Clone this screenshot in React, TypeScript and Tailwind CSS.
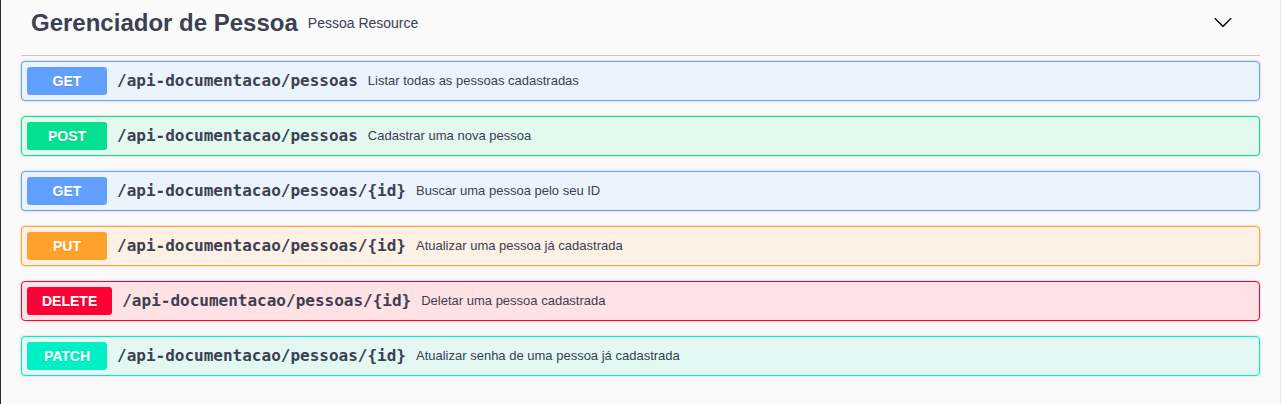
import React from 'react';

const operations = [
  {
    method: 'GET',
    path: '/api-documentacao/pessoas',
    summary: 'Listar todas as pessoas cadastradas',
    badge: 'bg-[#61a0fe]',
    block: 'bg-[#ebf3fd] border-[#61a0fe]',
  },
  {
    method: 'POST',
    path: '/api-documentacao/pessoas',
    summary: 'Cadastrar uma nova pessoa',
    badge: 'bg-[#03e08f]',
    block: 'bg-[#e3f8ef] border-[#03e08f]',
  },
  {
    method: 'GET',
    path: '/api-documentacao/pessoas/{id}',
    summary: 'Buscar uma pessoa pelo seu ID',
    badge: 'bg-[#61a0fe]',
    block: 'bg-[#ebf3fd] border-[#61a0fe]',
  },
  {
    method: 'PUT',
    path: '/api-documentacao/pessoas/{id}',
    summary: 'Atualizar uma pessoa já cadastrada',
    badge: 'bg-[#ffa12a]',
    block: 'bg-[#fdf0e4] border-[#ffa12a]',
  },
  {
    method: 'DELETE',
    path: '/api-documentacao/pessoas/{id}',
    summary: 'Deletar uma pessoa cadastrada',
    badge: 'bg-[#ff0035]',
    block: 'bg-[#fee2e5] border-[#ff0035]',
  },
  {
    method: 'PATCH',
    path: '/api-documentacao/pessoas/{id}',
    summary: 'Atualizar senha de uma pessoa já cadastrada',
    badge: 'bg-[#00f0c6]',
    block: 'bg-[#e3f8f2] border-[#00f0c6]',
  },
];

const App = () => {
  return (
    <div className="min-h-screen bg-[#fafafa] border-l border-l-[#2b2b2b] border-r border-r-[#e8e8e8] font-['Liberation_Sans',Arial,sans-serif] text-[#3b4151]">
      <div className="px-5">
        {/* tag header */}
        <div className="h-[56px] border-b border-[#c4c6cb] pt-[9px] pl-[10px] pr-[27px] flex items-start">
          <h4 className="text-[24px] font-bold leading-[28px]">Gerenciador de Pessoa</h4>
          <span className="flex-1 px-[10px] text-[14px] leading-[28px]">Pessoa Resource</span>
          <div className="h-[28px] flex items-center">
            <svg width="20" height="20" viewBox="0 0 20 20" className="mt-[-3px]">
              <path
                fill="#111"
                d="M17.418 6.109c.272-.268.709-.268.979 0s.271.701 0 .969l-7.908 7.83c-.27.268-.707.268-.979 0l-7.908-7.83c-.27-.268-.27-.701 0-.969.271-.268.709-.268.979 0L10 13.25l7.418-7.141z"
              />
            </svg>
          </div>
        </div>

        <div className="pt-[5px]">
          {operations.map((op, index) => (
            <div
              key={index}
              className={`mb-[15px] border rounded-[4px] shadow-[0_0_3px_rgba(0,0,0,0.19)] p-[5px] flex items-center ${op.block}`}
            >
              <span
                className={`min-w-[80px] px-[15px] py-[6px] rounded-[3px] text-white text-[14px] leading-[16px] font-bold text-center [text-shadow:0_1px_0_rgba(0,0,0,0.1)] ${op.badge}`}
              >
                {op.method}
              </span>
              <span className="px-[10px] font-['DejaVu_Sans_Mono',monospace] font-bold text-[16px] text-[#3b4151]">
                {op.path}
              </span>
              <span className="text-[13px] text-[#3b4151]">{op.summary}</span>
            </div>
          ))}
        </div>
      </div>
    </div>
  );
};

export default App;
